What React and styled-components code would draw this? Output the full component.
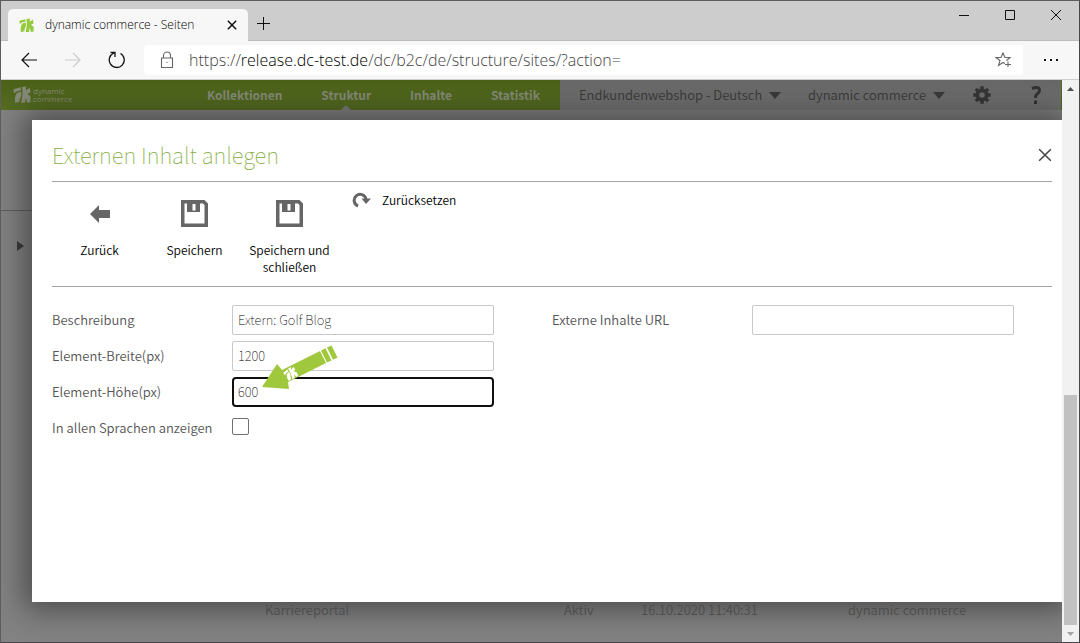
import React from "react";
import styled, { createGlobalStyle } from "styled-components";

const brandFont = '"Noto Sans CJK SC", "Noto Sans", sans-serif';
const systemFont = '"Open Sans", "Noto Sans", sans-serif';

const GlobalStyle = createGlobalStyle`
  *, *::before, *::after { box-sizing: border-box; }
  body { margin: 0; font-family: ${brandFont}; font-size: 13px; line-height: 18px; }
  button, input, select { font: inherit; color: inherit; }
  button { padding: 0; border: 0; background: none; }
  svg { display: block; flex: none; }
`;

const Window = styled.div`
  display: flex;
  flex-direction: column;
  height: 100vh;
  border: 1px solid #5e5c5e;
  border-right-color: #484648;
  border-bottom-color: #484648;
  overflow: hidden;
  background: #f7f7f7;
`;

const TabStrip = styled.header`
  display: flex;
  align-items: flex-end;
  height: 40px;
  flex: none;
  padding-left: 7px;
  background: #cdcdcd;
  border-bottom: 1px solid #bcbcbc;
`;

const Tab = styled.div`
  display: flex;
  align-items: center;
  width: 240px;
  height: 32px;
  margin-bottom: -1px;
  padding: 0 9px 0 11px;
  background: #f7f7f7;
  border-radius: 5px 5px 0 0;
  font-family: ${systemFont};
  font-size: 12px;
  font-weight: 300;
`;

const TabTitle = styled.span`
  flex: 1;
  margin-left: 11px;
  color: #000;
  white-space: nowrap;
`;

const IconButton = styled.button`
  display: flex;
  align-items: center;
  justify-content: center;
  flex: none;
  width: ${(p) => p.$w}px;
  height: ${(p) => p.$h || 30}px;
  color: ${(p) => p.$color || "#111"};
`;

const WindowButtons = styled.div`
  display: flex;
  align-self: flex-start;
  margin-left: auto;
`;

const AddressBar = styled.div`
  display: flex;
  align-items: center;
  height: 39px;
  flex: none;
  padding: 0 6px;
  border-bottom: 1px solid #cfcfcf;
`;

const AddressField = styled.div`
  display: flex;
  align-items: center;
  flex: 1;
  height: 30px;
  margin: 0 6px 0 5px;
  padding: 0 11px 0 16px;
  background: #fff;
  border-radius: 4px;
  font-family: ${systemFont};
  font-size: 16px;
  font-weight: 300;
  color: #444;
`;

const Url = styled.span`
  flex: 1;
  margin-left: 15px;
  white-space: nowrap;
`;

const Host = styled.span`
  color: #000;
`;

const Viewport = styled.div`
  display: flex;
  flex: 1;
  min-height: 0;
`;

const Page = styled.div`
  position: relative;
  flex: 1;
  min-width: 0;
  overflow: hidden;
  background: #828282;
`;

const SiteHeader = styled.div`
  display: flex;
  height: 30px;
  color: #3a3a3a;
  background: linear-gradient(#676767, #737373);
  border-right: 1px solid #516b21;
  white-space: nowrap;
`;

const BrandBar = styled.div`
  display: flex;
  align-items: center;
  width: 559px;
  flex: none;
  padding: 0 20px 0 12px;
  background: linear-gradient(#4b6118, #566d22);
  color: #868b78;
`;

const BrandName = styled.span`
  display: flex;
  flex-direction: column;
  width: 174px;
  margin-left: 2px;
  font-family: ${systemFont};
  font-size: 8px;
  line-height: 8px;
`;

const Nav = styled.nav`
  display: flex;
  flex: 1;
  justify-content: space-between;
`;

const NavLink = styled.a`
  position: relative;
  color: #868b78;
  font-size: 12px;
  font-weight: 700;
  line-height: 30px;
  text-decoration: none;

  &::after {
    content: "";
    display: ${(p) => (p.$active ? "block" : "none")};
    position: absolute;
    left: calc(50% - 5px);
    bottom: 0;
    border: 5px solid transparent;
    border-top: 0;
    border-bottom-color: #7c7c7c;
  }
`;

const Account = styled.div`
  display: grid;
  grid-template-columns: 229fr 165fr 58fr 10fr;
  flex: 1;
  align-items: center;
  padding: 0 20px 0 19px;
`;

const MenuButton = styled.button`
  display: flex;
  align-items: center;
  gap: 7px;
  font-size: 13px;
  font-weight: 350;
`;

const SideRail = styled.div`
  width: 31px;
  height: 101px;
  border-bottom: 1px solid #606060;
`;

const RailMarker = styled.div`
  padding: 30px 0 0 16px;
  color: #3b3b3b;
`;

const ResultRow = styled.div`
  position: absolute;
  left: 264px;
  right: 98px;
  bottom: 23px;
  display: grid;
  grid-template-columns: 299fr 77fr 207fr 116fr;
  color: #4c4c4c;
  font-weight: 350;
  white-space: nowrap;

  & > * { min-width: 0; }
`;

const Dialog = styled.section`
  position: absolute;
  inset: 40px 0 40px 31px;
  padding: 20px 10px 0 20px;
  background: #fff;
  box-shadow: 0 0 28px 8px rgba(0, 0, 0, 0.42);
`;

const DialogHead = styled.div`
  display: flex;
  align-items: center;
  justify-content: space-between;
  height: 42px;
  padding-bottom: 11px;
  border-bottom: 1px solid #a4a4a4;
`;

const Title = styled.h1`
  margin: 0;
  padding-bottom: 2px;
  color: #83ad3c;
  font-size: 22px;
  font-weight: 100;
  line-height: 28px;
`;

const Toolbar = styled.div`
  display: flex;
  height: 105px;
  border-bottom: 1px solid #a4a4a4;
`;

const Tool = styled.button`
  display: flex;
  flex-direction: column;
  align-items: center;
  width: 95px;
  padding-top: 17px;
  color: #000;
  font-size: 12px;
  font-weight: 350;
  line-height: 17px;
`;

const ToolIcon = styled.span`
  display: flex;
  align-items: center;
  height: 28px;
  margin-bottom: 14px;
  color: #666;
`;

const ResetButton = styled.button`
  display: flex;
  align-items: center;
  gap: 11px;
  height: 18px;
  margin: 9px 0 0 15px;
  color: #000;
  font-size: 12px;
  font-weight: 350;
`;

const Form = styled.form`
  display: grid;
  grid-template-columns: 1fr 1fr;
  padding-top: 18px;
`;

const Column = styled.div`
  display: flex;
  flex-direction: column;
  gap: 6px;
`;

const Field = styled.div`
  display: flex;
  align-items: center;
  height: 30px;
`;

const Label = styled.label`
  width: ${(p) => p.$w}px;
  flex: none;
  color: #555;
  font-weight: 350;
`;

const TextInput = styled.input`
  width: 262px;
  height: 30px;
  padding: 0 5px 2px;
  border: 1px solid #c8c8c8;
  border-radius: 2px;
  background: #fff;
  color: #000;
  font-size: 13px;
  font-weight: 100;
  outline: none;

  ${(p) => p.$current && "border: 2px solid #101010; border-radius: 4px; padding: 0 4px 2px;"}
`;

const Tick = styled.input`
  appearance: none;
  width: 17px;
  height: 17px;
  margin: 0 0 4px;
  border: 1px solid #707070;
  border-radius: 2px;
  background: #fff;
`;

const Pointer = styled.svg`
  position: absolute;
  left: 230px;
  top: 224px;
`;

const Scrollbar = styled.div`
  display: flex;
  flex-direction: column;
  align-items: center;
  width: 17px;
  flex: none;
  background: #f1f1f1;
`;

const Thumb = styled.div`
  width: 13px;
  height: 230px;
  margin-top: auto;
  background: #c1c1c1;
`;

function MarkShape() {
  return (
    <>
      <path d="M0.500 3.500L8.500 1.500L8.800 5L4.500 5.800L1 8Z" />
      <path d="M4 8Q6 6.200 9.300 6.300Q10 11 7.500 14.500L7.200 17.500L2.500 19Q1.500 12 4 8Z" />
      <path d="M10 1.200L14.500 0.500L14.300 5L18.500 2L19.500 7L16 9L19.500 11.500V18L15.800 18.500L14.300 13L13.300 18.500H9Q11.500 9 10 1.200Z" />
    </>
  );
}

function Mark({ size, color }) {
  return (
    <svg width={size} height={size} viewBox="0 0 20 20" fill={color} aria-hidden="true">
      <MarkShape />
    </svg>
  );
}

function Cross({ size, width = 1 }) {
  return (
    <svg width={size} height={size} viewBox="0 0 12 12" stroke="currentColor" strokeWidth={width}>
      <path d="M1 1L11 11M11 1L1 11" />
    </svg>
  );
}

function Triangle({ w, h, dir = "down" }) {
  const paths = { down: "M0 0H10L5 10Z", up: "M0 10H10L5 0Z", right: "M0 0L10 5L0 10Z" };
  return (
    <svg width={w} height={h} viewBox="0 0 10 10" preserveAspectRatio="none" fill="currentColor">
      <path d={paths[dir]} />
    </svg>
  );
}

function Disk() {
  return (
    <svg width="28" height="28" viewBox="0 0 28 28" fill="currentColor">
      <path fillRule="evenodd" d="M0 1H23.500L27 4.500V28H0ZM3.500 4.500V24.500H23.500V6L22 4.500H19V13H6V4.500ZM11.500 5V11.500H14.500V5Z" />
    </svg>
  );
}

function Gear() {
  return (
    <svg width="18" height="18" viewBox="0 0 18 18" fill="none" stroke="#363636">
      <circle cx="9" cy="9" r="4.600" strokeWidth="3.600" />
      <g strokeWidth="3.400">
        {[0, 45, 90, 135].map((a) => (
          <path key={a} transform={`rotate(${a} 9 9)`} d="M9 0.300V4M9 14V17.700" />
        ))}
      </g>
    </svg>
  );
}

function BrowserChrome() {
  return (
    <>
      <TabStrip>
        <Tab>
          <Mark size={15} color="#94ca3c" />
          <TabTitle>dynamic commerce - Seiten</TabTitle>
          <IconButton $w={14} aria-label="Tab schließen"><Cross size={10} width={1.8} /></IconButton>
        </Tab>
        <IconButton $w={31} $h={33} aria-label="Neuer Tab">
          <svg width="13" height="13" viewBox="0 0 13 13" stroke="currentColor"><path d="M6.500 0V13M0 6.500H13" /></svg>
        </IconButton>
        <WindowButtons>
          <IconButton $w={46} aria-label="Minimieren">
            <svg width="10" height="10" viewBox="0 0 10 10" stroke="currentColor"><path d="M0 4.500H10" /></svg>
          </IconButton>
          <IconButton $w={46} $h={28} aria-label="Maximieren">
            <svg width="10" height="10" viewBox="0 0 10 10" fill="none" stroke="currentColor"><path d="M.5.500H9.500V9.500H.5Z" /></svg>
          </IconButton>
          <IconButton $w={46} $h={28} aria-label="Schließen"><Cross size={12} /></IconButton>
        </WindowButtons>
      </TabStrip>
      <AddressBar>
        <IconButton $w={44} aria-label="Zurück">
          <svg width="16" height="16" viewBox="0 0 16 16" fill="none" stroke="currentColor" strokeWidth="1.200"><path d="M16 8H1M8 1L1 8L8 15" /></svg>
        </IconButton>
        <IconButton $w={44} $color="#ccc" aria-label="Vorwärts">
          <svg width="16" height="16" viewBox="0 0 16 16" fill="none" stroke="currentColor" strokeWidth="1.200"><path d="M0 8H15M8 1L15 8L8 15" /></svg>
        </IconButton>
        <IconButton $w={44} aria-label="Neu laden">
          <svg width="18" height="18" viewBox="0 0 18 18" fill="none" stroke="currentColor" strokeWidth="1.300"><path d="M12.500 2.500A7.500 7.500 0 1 1 6 2M2.500 1.500H7V6" /></svg>
        </IconButton>
        <AddressField>
          <svg width="14" height="18" viewBox="0 0 14 18" fill="none" stroke="#666" strokeWidth="1.100">
            <path d="M1.500 7H12.500V16.500H1.500ZM3.500 7V4.500A3.500 3.500 0 0 1 10.500 4.500V7" /><path d="M6.500 11.500H7.500" />
          </svg>
          <Url>https://<Host>release.dc-test.de</Host>/dc/b2c/de/structure/sites/?action=</Url>
          <svg width="17" height="16" viewBox="0 0 17 16" fill="none" stroke="#666" strokeWidth="1.100">
            <path d="M10 11.500L8 10.500L3.500 13.500L5 8.500L1 5.500H6L8 1L10 5.500H15L11.500 8.500M13 9.500V15M10 12.500H16" />
          </svg>
        </AddressField>
        <IconButton $w={44} aria-label="Mehr">
          <svg width="14" height="2" viewBox="0 0 14 2" fill="currentColor"><path d="M0 0H2V2H0ZM6 0H8V2H6ZM12 0H14V2H12Z" /></svg>
        </IconButton>
      </AddressBar>
    </>
  );
}

function ShopHeader() {
  return (
    <SiteHeader>
      <BrandBar>
        <Mark size={18} color="#868b78" />
        <BrandName><span>dynamic</span><span>commerce</span></BrandName>
        <Nav>
          <NavLink href="#kollektionen">Kollektionen</NavLink>
          <NavLink href="#struktur" $active>Struktur</NavLink>
          <NavLink href="#inhalte">Inhalte</NavLink>
          <NavLink href="#statistik">Statistik</NavLink>
        </Nav>
      </BrandBar>
      <Account>
        <MenuButton>Endkundenwebshop - Deutsch <Triangle w={12} h={7} /></MenuButton>
        <MenuButton>dynamic commerce <Triangle w={12} h={7} /></MenuButton>
        <IconButton $w={18} aria-label="Einstellungen"><Gear /></IconButton>
        <IconButton $w={10} $color="#333" aria-label="Hilfe">
          <svg width="10" height="18" viewBox="0 0 10 18" fill="none" stroke="currentColor" strokeWidth="3"><path d="M1 2.500Q8.500 0 8.500 4.500Q8.500 6.500 6 8Q4.500 9 4.500 12M4.500 14.500V18" /></svg>
        </IconButton>
      </Account>
    </SiteHeader>
  );
}

function TextField({ id, label, value, labelWidth, current }) {
  return (
    <Field>
      <Label htmlFor={id} $w={labelWidth}>{label}</Label>
      <TextInput id={id} defaultValue={value} $current={current} />
    </Field>
  );
}

export default function App() {
  return (
    <Window>
      <GlobalStyle />
      <BrowserChrome />
      <Viewport>
        <Page>
          <ShopHeader />
          <SideRail />
          <RailMarker><Triangle w={7} h={10} dir="right" /></RailMarker>
          <Dialog role="dialog" aria-labelledby="dialog-title">
            <DialogHead>
              <Title id="dialog-title">Externen Inhalt anlegen</Title>
              <IconButton $w={14} $color="#444" aria-label="Dialog schließen"><Cross size={14} width={1.3} /></IconButton>
            </DialogHead>
            <Toolbar>
              <Tool>
                <ToolIcon><svg width="20" height="20" viewBox="0 0 20 20" fill="currentColor"><path d="M0 11L9 2V7H20V15H9V20Z" /></svg></ToolIcon>
                Zurück
              </Tool>
              <Tool><ToolIcon><Disk /></ToolIcon>Speichern</Tool>
              <Tool><ToolIcon><Disk /></ToolIcon>Speichern und schließen</Tool>
              <ResetButton>
                <svg width="19" height="16" viewBox="0 0 19 16" fill="none" stroke="#666" strokeWidth="3"><path d="M6 14A6 6 0 1 1 14 7" /><path d="M9.500 6.500H19L14 12Z" fill="#666" stroke="none" /></svg>
                Zurücksetzen
              </ResetButton>
            </Toolbar>
            <Form>
              <Column>
                <TextField id="beschreibung" label="Beschreibung" value="Extern: Golf Blog" labelWidth={180} />
                <TextField id="breite" label="Element-Breite(px)" value="1200" labelWidth={180} />
                <TextField id="hoehe" label="Element-Höhe(px)" value="600" labelWidth={180} current />
                <Field>
                  <Label htmlFor="sprachen" $w={180}>In allen Sprachen anzeigen</Label>
                  <Tick type="checkbox" id="sprachen" />
                </Field>
              </Column>
              <Column>
                <TextField id="url" label="Externe Inhalte URL" value="" labelWidth={200} />
              </Column>
            </Form>
            <Pointer width="78" height="46" viewBox="0 0 78 46" aria-hidden="true">
              <path fill="#a0c83c" d="M0 43L15 20L20 26L58 7L64 19L26 38L27 45Z" />
              <path fill="#a0c83c" d="M59 6.500L63.500 4.300L69.500 16.500L65 18.600ZM65 3.600L69.500 1.500L75.500 13.500L71 15.700Z" />
              <g transform="translate(20 27) rotate(-27) scale(.64)" fill="#fff">
                <MarkShape />
              </g>
            </Pointer>
          </Dialog>
          <ResultRow>
            <span>Karriereportal</span><span>Aktiv</span><span>16.10.2020 11:40:31</span><span>dynamic commerce</span>
          </ResultRow>
        </Page>
        <Scrollbar>
          <IconButton $w={16} $h={18} $color="#505050" aria-label="Nach oben"><Triangle w={7} h={4} dir="up" /></IconButton>
          <Thumb />
          <IconButton $w={16} $h={17} $color="#a3a3a3" aria-label="Nach unten"><Triangle w={7} h={4} /></IconButton>
        </Scrollbar>
      </Viewport>
    </Window>
  );
}
